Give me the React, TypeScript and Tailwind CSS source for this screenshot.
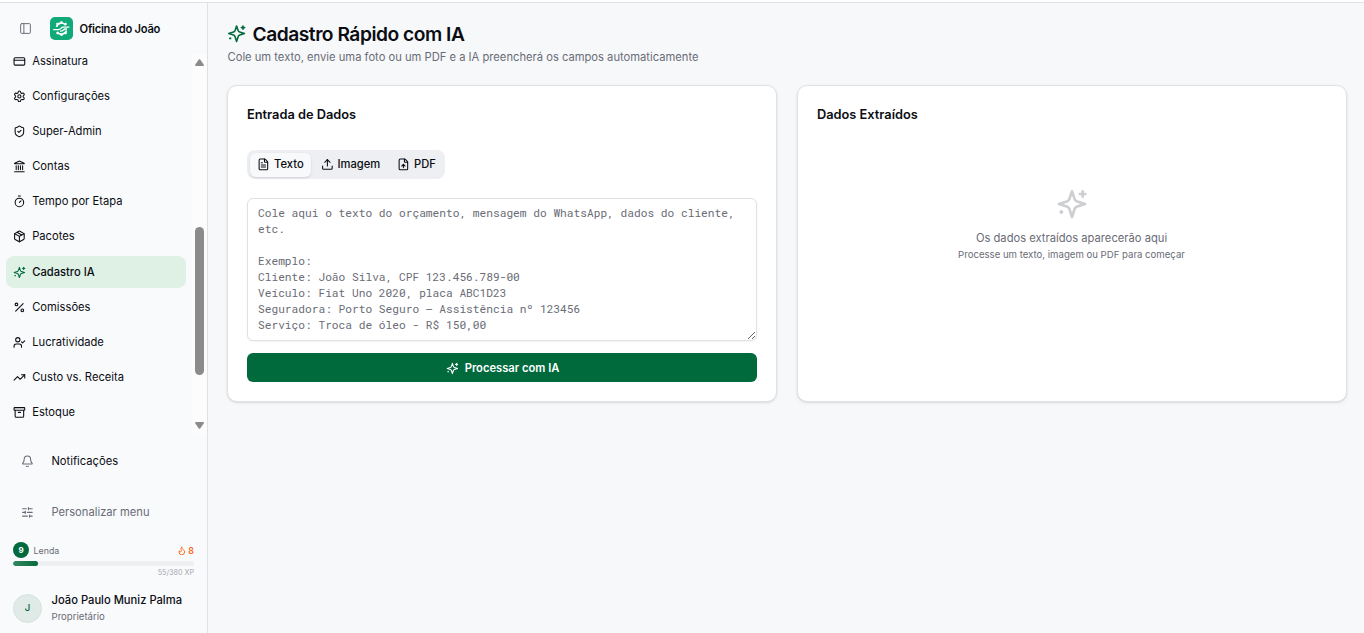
import type { ReactNode } from "react";
import { clsx } from "clsx";
import {
  Archive,
  Bell,
  CreditCard,
  FileText,
  FileUp,
  Flame,
  Landmark,
  Package,
  PanelLeft,
  Percent,
  Settings,
  ShieldCheck,
  SlidersHorizontal,
  Timer,
  TrendingUp,
  Upload,
  UserCheck,
} from "lucide-react";
import type { LucideIcon } from "lucide-react";

type NavItem = { label: string; icon: LucideIcon | typeof Sparkle; active?: boolean };

const navItems: NavItem[] = [
  { label: "Assinatura", icon: CreditCard },
  { label: "Configurações", icon: Settings },
  { label: "Super-Admin", icon: ShieldCheck },
  { label: "Contas", icon: Landmark },
  { label: "Tempo por Etapa", icon: Timer },
  { label: "Pacotes", icon: Package },
  { label: "Cadastro IA", icon: Sparkle, active: true },
  { label: "Comissões", icon: Percent },
  { label: "Lucratividade", icon: UserCheck },
  { label: "Custo vs. Receita", icon: TrendingUp },
  { label: "Estoque", icon: Archive },
];

const placeholder = `Cole aqui o texto do orçamento, mensagem do WhatsApp, dados do cliente, etc.

Exemplo:
Cliente: João Silva, CPF 123.456.789-00
Veículo: Fiat Uno 2020, placa ABC1D23
Seguradora: Porto Seguro – Assistência nº 123456
Serviço: Troca de óleo - R$ 150,00`;

export default function App() {
  return (
    <div className="flex h-[633px] flex-col overflow-hidden bg-[#f7f8fa] font-['Inter','Liberation_Sans',sans-serif] text-[#0b0d12]">
      <div className="h-[3px] shrink-0 border-b border-[#dfe2e4] bg-white" />
      <div className="flex min-h-0 flex-1">
        <Sidebar />
        <main className="flex-1 pl-[19px] pr-[17px] pt-[19px]">
          <h1 className="flex h-6 items-center gap-[6.4px] text-[19.2px] font-semibold tracking-[-0.48px]">
            <Sparkle className="size-[19.2px] text-[#006a3d]" />
            Cadastro Rápido com IA
          </h1>
          <p className="mt-[3px] pl-[0.5px] text-[11.2px] leading-4 text-[#696c76]">
            Cole um texto, envie uma foto ou um PDF e a IA preencherá os campos automaticamente
          </p>

          <div className="mt-5 grid grid-cols-2 gap-5">
            <Card title="Entrada de Dados">
              <div className="mt-[26px] flex h-[29px] w-[198px] items-center rounded-lg bg-[#eeeff3] px-[3px] text-[11.2px] font-medium">
                <Tab icon={FileText} label="Texto" className="w-[61px] rounded-md bg-[#f8f9fb] shadow-sm" />
                <Tab icon={Upload} label="Imagem" className="w-[79px]" />
                <Tab icon={FileUp} label="PDF" className="w-[52px] pl-px" />
              </div>
              <textarea
                placeholder={placeholder}
                className="mt-[19px] block h-[143px] w-full resize-y overflow-hidden rounded-md border border-[#dfe1e3] bg-white px-[10px] py-[6px] font-['Roboto_Mono','Liberation_Mono',monospace] text-[11.2px] leading-4 shadow-xs outline-none placeholder:text-[#696c76]"
              />
              <button className="mt-3 flex h-[29px] w-full items-center justify-center gap-[6.4px] rounded-md bg-[#006a3d] pl-px pt-px text-[11.2px] font-semibold text-white">
                <Sparkle className="size-[12.8px]" />
                Processar com IA
              </button>
            </Card>
            <Card title="Dados Extraídos">
              <div className="mt-[64px] flex flex-col items-center pr-px text-[#696c76]">
                <Sparkle className="size-8 text-[#cdced1]" />
                <p className="mt-[10px] text-[11.2px] leading-4">Os dados extraídos aparecerão aqui</p>
                <p className="mt-[2px] text-[9.6px] leading-[13px]">
                  Processe um texto, imagem ou PDF para começar
                </p>
              </div>
            </Card>
          </div>
        </main>
      </div>
    </div>
  );
}

function Sidebar() {
  return (
    <aside className="flex w-[208px] shrink-0 flex-col border-r border-[#dfe2e4] bg-[#f9fafc]">
      <div className="flex h-[51px] shrink-0 items-center pl-[19px]">
        <PanelLeft className="size-[13px] text-[#696c76]" strokeWidth={1.8} />
        <Logo />
        <span className="ml-[7px] mt-px text-[11.2px] font-semibold tracking-[-0.28px]">Oficina do João</span>
      </div>

      <div className="flex h-[381px] shrink-0">
        <nav className="flex flex-1 flex-col gap-[3.2px] overflow-hidden px-[6px]">
          {/* scrolled so that the first row is partly under the header */}
          {navItems.map(({ label, icon: Icon, active }) => (
            <div
              key={label}
              className={clsx(
                "flex h-8 shrink-0 items-center gap-[6.4px] rounded-lg px-[7px] text-[11.2px] first:-mt-[9.1px]",
                active && "bg-[#dff0e5] font-medium",
              )}
            >
              <Icon className={clsx("size-[12.8px]", active && "text-[#006a3d]")} />
              {label}
            </div>
          ))}
        </nav>
        <Scrollbar />
      </div>

      <div className="mt-[10px] flex h-8 items-center pl-[21px] text-[11.2px]">
        <Bell className="mr-[17.6px] size-[12.8px] text-[#696c76]" />
        Notificações
      </div>
      <div className="mt-[19px] flex h-8 items-center pl-[21px] text-[11.2px] text-[#696c76]">
        <SlidersHorizontal className="mr-[17.6px] size-[12.8px]" />
        Personalizar menu
      </div>

      <div className="mt-[14px] px-[13px]">
        <div className="flex h-4 items-center text-[8.8px] text-[#696c76]">
          <span className="mr-[4.6px] flex size-4 items-center justify-center rounded-full bg-[#006a3d] text-[8px] font-bold text-white">
            9
          </span>
          <span className="pt-px">Lenda</span>
          <span className="ml-auto flex items-center gap-[2px] pt-px font-semibold text-[#f76b1c]">
            <Flame className="size-[9.6px]" strokeWidth={2.4} />8
          </span>
        </div>
        <div className="mt-[3px] h-[5px] overflow-hidden rounded-full bg-[#eeeff1]">
          <div className="h-full w-[25px] rounded-full bg-linear-to-r from-[#338861] to-[#006a3d]" />
        </div>
        <p className="mt-[2px] text-right text-[7.2px] leading-[10px] text-[#a5a7ad]">55/380 XP</p>
      </div>

      <div className="mt-[13px] flex items-center gap-[9.5px] pl-[13px]">
        <div className="mt-[3px] flex size-[29px] items-center justify-center rounded-full border border-[#d9e2df] bg-[#e0eae6] text-[9.6px] font-medium text-[#006a3d]">
          J
        </div>
        <div>
          <p className="text-[11.2px] font-medium leading-4">João Paulo Muniz Palma</p>
          <p className="mt-[2px] text-[9.6px] leading-[13px] text-[#696c76]">Proprietário</p>
        </div>
      </div>
    </aside>
  );
}

function Card({ title, children }: { title: string; children: ReactNode }) {
  return (
    <section className="h-[317px] rounded-[10px] border border-[#dfe1e3] bg-white px-[19px] pt-5 shadow-sm">
      <h2 className="text-[12.8px] font-semibold leading-[18px]">{title}</h2>
      {children}
    </section>
  );
}

function Tab({ icon: Icon, label, className }: { icon: LucideIcon; label: string; className?: string }) {
  return (
    <button className={clsx("flex h-6 shrink-0 items-center justify-center gap-1", className)}>
      <Icon className="size-[12.8px]" />
      {label}
    </button>
  );
}

function Scrollbar() {
  return (
    <div className="flex w-[15px] flex-col items-center bg-[#fcfcfc] pb-[6px] pt-[5px]">
      <svg viewBox="0 0 9 7" className="h-[7px] w-[9px] fill-[#8b8b8b]">
        <path d="M3.8 0.6Q4.5-.2 5.2.6L8.7 5.6Q9.3 7 8 7H1Q-.3 7 .3 5.6Z" />
      </svg>
      <div className="mt-[161px] h-[148px] w-[9px] rounded-full bg-[#8b8b8b]" />
      <svg viewBox="0 0 9 7" className="mt-auto h-[7px] w-[9px] fill-[#8b8b8b]">
        <path d="M3.8 6.4Q4.5 7.2 5.2 6.4L8.7 1.4Q9.3 0 8 0H1Q-.3 0 .3 1.4Z" />
      </svg>
    </div>
  );
}

function Sparkle({ className }: { className?: string }) {
  return (
    <svg
      viewBox="0 0 24 24"
      fill="none"
      stroke="currentColor"
      strokeWidth="2"
      strokeLinecap="round"
      strokeLinejoin="round"
      className={className}
    >
      <path d="M12 2.5 10.1 8.1Q9.6 9.6 8.1 10.1L2.2 12 8.1 13.9Q9.6 14.4 10.1 15.9L12 21.8 13.9 15.9Q14.4 14.4 15.9 13.9L21.8 12 15.9 10.1Q14.4 9.6 13.9 8.1Z" />
      <path d="M20 2.5v4M22 4.5h-4M4 17.5v1M4.5 18h-1" />
    </svg>
  );
}

function Logo() {
  return (
    <svg viewBox="0 0 23 23" fill="none" className="ml-[17.6px] size-[23px]">
      <rect width="23" height="23" rx="5" fill="#10aa78" />
      {/* gear, cut in two halves by the swoosh */}
      <path
        d="M6.6 9.9A5 5 0 0 1 15.6 8.2M16.4 13.4A5 5 0 0 1 7.4 15"
        stroke="#fff"
        strokeWidth="1.7"
      />
      <path
        d="M11.5 4.2v2.2M11.5 16.8v2.2M6.6 6.3l1.5 1.5M15 15.3l1.5 1.5M16.4 6.3l-1.4 1.5M6.6 16.8l1.5-1.5"
        stroke="#fff"
        strokeWidth="2"
      />
      <path
        d="M3.2 12.6H8.5Q10 12.6 11 11.4T13.3 10.2H19.4M10 14.2Q12.5 14.2 13.3 13.1T15.3 12H17"
        stroke="#fff"
        strokeWidth="1.3"
      />
    </svg>
  );
}
